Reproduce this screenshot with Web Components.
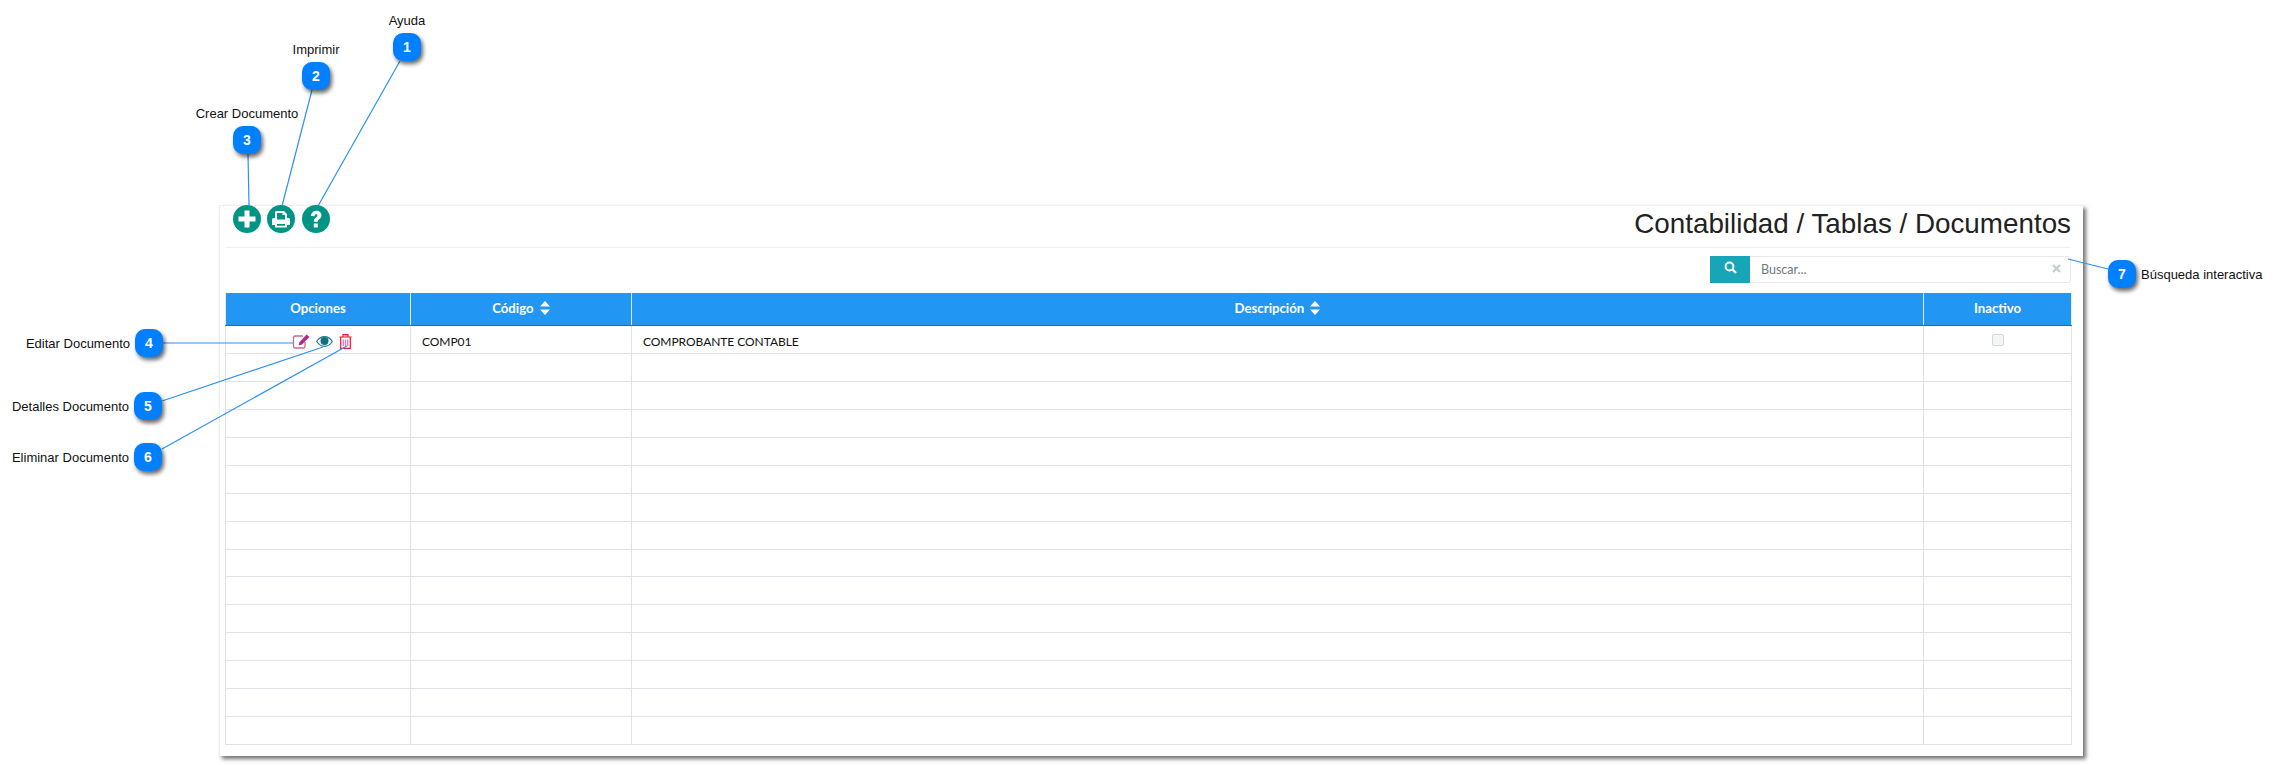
<!DOCTYPE html>
<html lang="es">
<head>
<meta charset="utf-8">
<title>Contabilidad / Tablas / Documentos</title>
<style>
  html, body { margin: 0; background: #fff; }
</style>
</head>
<body>
<help-page>
  <doc-panel title-text="Contabilidad / Tablas / Documentos"></doc-panel>
  <call-out slot="overlay" n="1" x="393" y="33" label="Ayuda" side="top"></call-out>
  <call-out slot="overlay" n="2" x="302" y="62" label="Imprimir" side="top"></call-out>
  <call-out slot="overlay" n="3" x="233" y="126" label="Crear Documento" side="top"></call-out>
  <call-out slot="overlay" n="4" x="135" y="329" label="Editar Documento" side="left"></call-out>
  <call-out slot="overlay" n="5" x="134" y="392" label="Detalles Documento" side="left"></call-out>
  <call-out slot="overlay" n="6" x="134" y="443" label="Eliminar Documento" side="left"></call-out>
  <call-out slot="overlay" n="7" x="2108" y="260" label="Búsqueda interactiva" side="right"></call-out>
</help-page>

<script>
class HelpPage extends HTMLElement {
  connectedCallback() {
    this.attachShadow({ mode: 'open' });
    // leader lines from each marker to the thing it points at
    const lines = [
      [400, 61, 318, 206], [312, 90, 282, 206], [248, 154, 249, 206],
      [163, 343, 293, 343], [162, 401, 323, 347], [162, 449, 347, 346],
      [2108, 269, 2068, 259]
    ];
    this.shadowRoot.innerHTML = `
      <style>
        :host { display: block; position: relative; width: 2277px; height: 765px; overflow: hidden;
          font-family: "Liberation Sans", Arial, sans-serif; }
        .content { padding: 205px 0 0 219px; }
        svg { position: absolute; left: 0; top: 0; pointer-events: none; }
      </style>
      <div class="content"><slot></slot></div>
      <svg width="2277" height="765">
        ${lines.map(l => `<line x1="${l[0]}" y1="${l[1]}" x2="${l[2]}" y2="${l[3]}" stroke="#2b90f5" stroke-width="1.2"/>`).join('')}
      </svg>
      <slot name="overlay"></slot>
    `;
  }
}
customElements.define('help-page', HelpPage);

class CallOut extends HTMLElement {
  connectedCallback() {
    this.attachShadow({ mode: 'open' });
    const side = this.getAttribute('side');
    this.shadowRoot.innerHTML = `
      <style>
        :host { display: block; position: absolute; width: 28px; height: 28px;
          left: ${this.getAttribute('x')}px; top: ${this.getAttribute('y')}px; }
        .mark { width: 28px; height: 28px; border-radius: 10px; background: #007fff; color: #fff;
          box-shadow: 2px 3px 4px rgba(0,0,0,.6); display: flex; align-items: center; justify-content: center;
          font-size: 14px; font-weight: bold; }
        .label { position: absolute; white-space: nowrap; font-size: 13px; color: #111; line-height: 16px; }
        .top { left: 14px; bottom: 32px; transform: translateX(-50%); }
        .left { right: 33px; top: 7px; }
        .right { left: 33px; top: 7px; }
      </style>
      <div class="mark">${this.getAttribute('n')}</div>
      <div class="label ${side}">${this.getAttribute('label')}</div>
    `;
  }
}
customElements.define('call-out', CallOut);

class RoundButton extends HTMLElement {
  connectedCallback() {
    this.attachShadow({ mode: 'open' });
    const glyphs = {
      plus: '<path d="M11.500 5.500h5V11.500H22.500v5H16.500V22.500h-5V16.500H5.500v-5H11.500z" fill="#fff"/>',
      print: '<path fill="#fff" fill-rule="evenodd" d="M9 6h8l3 3v4h1.500A1.500 1.500 0 0 1 23 14.500V20h-3v2.500H8V20H5v-5.500A1.500 1.500 0 0 1 6.500 13H8V7zM10 8v6.500h8V10h-2.500V8zM10 19v1.800h8V19z"/>',
      help: '<path d="M9 11c.2-3.300 2.500-5.300 5.200-5.300 3 0 5.300 1.900 5.300 4.600 0 3.700-3.700 3.600-3.700 6.500h-4c0-4.300 3.600-4.400 3.600-6.300 0-.8-.5-1.300-1.300-1.300-1 0-1.400.7-1.500 2z" fill="#fff"/><rect x="11.800" y="18.500" width="4" height="4" fill="#fff"/>'
    };
    this.shadowRoot.innerHTML = `
      <style>
        :host { display: block; width: 28px; height: 28px; }
        svg { display: block; }
      </style>
      <svg width="28" height="28" viewBox="0 0 28 28">
        <circle cx="14" cy="14" r="14" fill="#009485"/>
        ${glyphs[this.getAttribute('icon')]}
      </svg>
    `;
  }
}
customElements.define('round-button', RoundButton);

class SearchBox extends HTMLElement {
  connectedCallback() {
    this.attachShadow({ mode: 'open' });
    this.shadowRoot.innerHTML = `
      <style>
        :host { display: flex; width: 361px; height: 27px; font-family: Lato, sans-serif; }
        .btn { width: 40px; background: #17a5b8; display: flex; align-items: center; justify-content: center; padding-bottom: 4px; box-sizing: border-box; }
        .field { flex: 1; display: flex; align-items: center; justify-content: space-between; box-sizing: border-box;
          border: 1px solid #e6e8ec; border-left: 0; border-radius: 0 3px 3px 0; padding: 0 9px 0 11px;
          font-size: 12.500px; color: #6f7780; }
        .x { margin-bottom: 3px; }
      </style>
      <div class="btn">
        <svg width="13" height="13" viewBox="0 0 13 13"><circle cx="5.500" cy="5.500" r="3.900" fill="none" stroke="#fff" stroke-width="2"/><line x1="8.500" y1="8.500" x2="12" y2="12" stroke="#fff" stroke-width="2.400"/></svg>
      </div>
      <div class="field">
        <span>Buscar...</span>
        <svg class="x" width="9" height="9" viewBox="0 0 9 9"><path d="M1 1l7 7M8 1L1 8" stroke="#c4d0d0" stroke-width="2.400"/></svg>
      </div>
    `;
  }
}
customElements.define('search-box', SearchBox);

class DocTable extends HTMLElement {
  connectedCallback() {
    this.attachShadow({ mode: 'open' });
    const sort = `<svg class="sort" width="10" height="14" viewBox="0 0 10 14"><path d="M5 0L10 5.500H0zM5 14L0 8.500h10z" fill="#fff"/></svg>`;
    const icons = `
      <svg width="18" height="15" viewBox="0 0 18 15">
        <path d="M11 2H3a1.500 1.500 0 0 0-1.500 1.500v9A1.500 1.500 0 0 0 3 14h8.500a1.500 1.500 0 0 0 1.500-1.500V8" fill="none" stroke="#c0708f" stroke-width="1.300"/>
        <path d="M14.500 0.500l3 2.500-7.500 7.500-3.500 1 1-3.500z" fill="#a82f8f"/>
      </svg>
      <svg width="17" height="11" viewBox="0 0 17 11">
        <path d="M0.700 5.500C3 2 5.500 0.700 8.500 0.700S14 2 16.300 5.500C14 9 11.500 10.300 8.500 10.300S3 9 0.700 5.500z" fill="none" stroke="#1b7f8c" stroke-width="1.200"/>
        <circle cx="8.500" cy="5" r="4" fill="#14707f"/>
      </svg>
      <svg width="13" height="15" viewBox="0 0 13 15">
        <path d="M0.500 3h12M4 3V0.700h5V3M1.700 3v11.300h9.600V3" fill="none" stroke="#f5112a" stroke-width="1.200"/>
        <path d="M4.300 5.500v6.500M6.500 5.500v6.500M8.700 5.500v6.500" stroke="#e878c8" stroke-width="1.300"/>
      </svg>`;
    const empty = Array.from({ length: 14 }, () => '<tr><td></td><td></td><td></td><td></td></tr>').join('');
    this.shadowRoot.innerHTML = `
      <style>
        :host { display: block; font-family: Lato, sans-serif; }
        table { border-collapse: collapse; table-layout: fixed; width: 1846px; }
        th, td { border: 1px solid #dfe2e8; padding: 0; box-sizing: border-box; }
        th { height: 32px; background: #2196f3; color: #fff; font-size: 13.200px; font-weight: bold; text-align: center;
          border-color: #e4eaf0; border-bottom: 1px solid #00838f; border-top: 0; padding-bottom: 2px; }
        td { height: 28px; font-size: 12px; color: #111; padding-left: 11px; }
        tr.first td { padding-top: 5px; letter-spacing: -.05px; }
        tr.first td.opts, tr.first td.check { padding-left: 0; }
        tr.first td.opts { padding-top: 4px; }
        tr.first td.check { padding-top: 4px; }
        tr:nth-child(9) td { height: 27px; }
        .opts div { display: flex; align-items: center; justify-content: center; gap: 6px; padding-left: 7px; }
        .sort { vertical-align: -2px; margin-left: 3px; }
        .check { text-align: center; }
        .check i { display: inline-block; width: 10px; height: 10px; border: 1px solid #d5d8dc; border-radius: 2px; background: #f4f5f6; vertical-align: 0; }
      </style>
      <table>
        <colgroup><col style="width:185px"><col style="width:221px"><col style="width:1292px"><col style="width:148px"></colgroup>
        <thead><tr><th>Opciones</th><th>Código ${sort}</th><th>Descripción ${sort}</th><th>Inactivo</th></tr></thead>
        <tbody>
          <tr class="first"><td class="opts"><div>${icons}</div></td><td>COMP01</td><td>COMPROBANTE CONTABLE</td><td class="check"><i></i></td></tr>
          ${empty}
        </tbody>
      </table>
    `;
  }
}
customElements.define('doc-table', DocTable);

class DocPanel extends HTMLElement {
  connectedCallback() {
    this.attachShadow({ mode: 'open' });
    this.shadowRoot.innerHTML = `
      <style>
        :host { display: block; box-sizing: border-box; width: 1864px; height: 551px; background: #fff;
          border-top: 1px solid #eeeeee; border-left: 1px solid #eeeeee;
          box-shadow: 3px 3px 4px rgba(0,0,0,.55); padding: 0 12px 0 5px; }
        .head { display: flex; align-items: flex-start; justify-content: space-between; height: 42px;
          border-bottom: 1px solid #eeeeee; box-sizing: border-box; margin-bottom: 8px; }
        .tools { display: flex; gap: 6px; margin: -1px 0 0 8px; }
        .tools :last-child { margin-left: 1px; }
        h1 { margin: 0; font-size: 27.800px; font-weight: normal; color: #222; line-height: 36px; }
        .find { display: flex; justify-content: flex-end; margin-bottom: 10px; }
      </style>
      <div class="head">
        <div class="tools">
          <round-button icon="plus"></round-button>
          <round-button icon="print"></round-button>
          <round-button icon="help"></round-button>
        </div>
        <h1>${this.getAttribute('title-text')}</h1>
      </div>
      <div class="find"><search-box></search-box></div>
      <doc-table></doc-table>
    `;
  }
}
customElements.define('doc-panel', DocPanel);
</script>
</body>
</html>
